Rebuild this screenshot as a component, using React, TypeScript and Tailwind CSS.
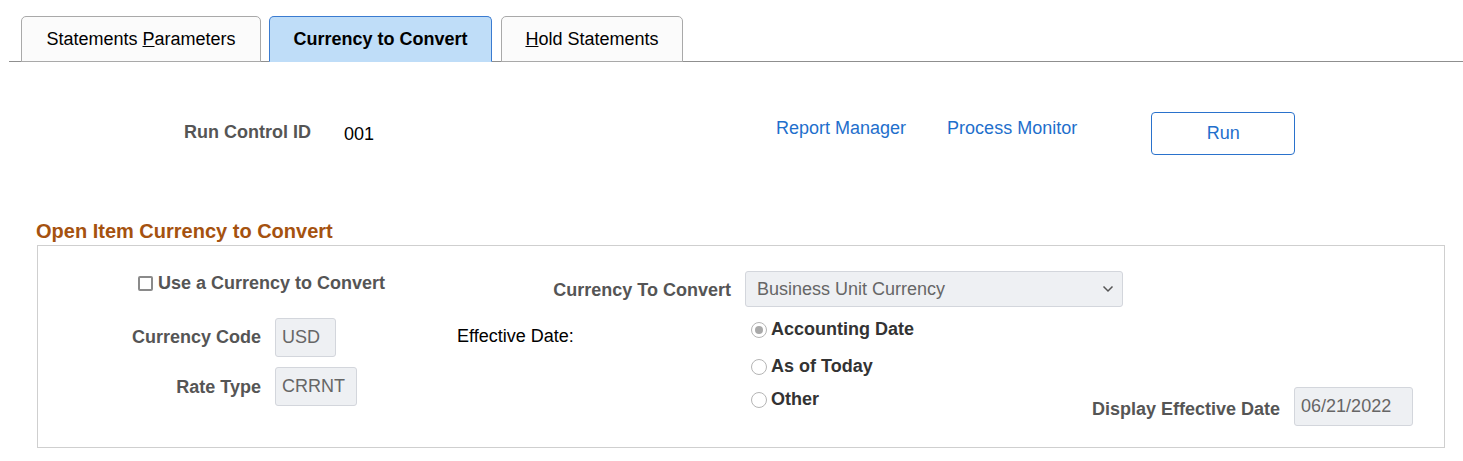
import React from 'react';

const Tab = ({ label, active }: { label: React.ReactNode; active?: boolean }) => (
  <div
    className={
      'h-[46px] -mb-px flex items-center justify-center rounded-t-[5px] border text-[18px] ' +
      (active
        ? 'bg-[#bfddf8] border-[#3a7bd0] border-b-[#bfddf8] font-bold text-black'
        : 'bg-[#fbfbfb] border-[#a9a9a9] text-black')
    }
  >
    {label}
  </div>
);

const Radio = ({ checked, label }: { checked?: boolean; label: string }) => (
  <div className="flex items-center gap-[4px]">
    <span className="w-[16px] h-[16px] rounded-full border border-[#b5b5b5] bg-white flex items-center justify-center">
      {checked && <span className="w-[8px] h-[8px] rounded-full bg-[#a9a9a9]" />}
    </span>
    <span className="text-[18px] font-bold text-[#333333]">{label}</span>
  </div>
);

const ReadOnly = ({ value, w }: { value: string; w: string }) => (
  <div className={`${w} h-[39px] flex items-center px-[6px] rounded-[3px] border border-[#d3d6dc] bg-[#eef0f3] text-[18px] text-[#666666]`}>
    {value}
  </div>
);

export default function App() {
  return (
    <div className="w-[1463px] h-[461px] bg-white font-['Liberation_Sans',Arial,sans-serif] overflow-hidden">
      {/* Tabs */}
      <div className="pt-[16px] ml-[9px] border-b border-[#8f8f8f]">
        <div className="flex pl-[12px]">
          <div className="w-[240px]">
            <Tab label={<span>Statements <span className="underline">P</span>arameters</span>} />
          </div>
          <div className="w-[223px] ml-[8px]">
            <Tab active label="Currency to Convert" />
          </div>
          <div className="w-[182px] ml-[9px]">
            <Tab label={<span><span className="underline">H</span>old Statements</span>} />
          </div>
        </div>
      </div>

      {/* Run control row */}
      <div className="flex items-start mt-[50px] h-[43px]">
        <div className="ml-[184px] mt-[7px] text-[18px] font-bold text-[#555555]">Run Control ID</div>
        <div className="ml-[33px] mt-[9px] text-[18px] text-black">001</div>
        <div className="ml-[402px] mt-[3px] text-[18px] text-[#1f6fcc]">Report Manager</div>
        <div className="ml-[41px] mt-[3px] text-[18px] text-[#1f6fcc]">Process Monitor</div>
        <button className="ml-[74px] w-[144px] h-[43px] rounded-[4px] border border-[#2a72cc] bg-white text-[18px] text-[#1f6fcc]">
          Run
        </button>
      </div>

      {/* Section header */}
      <div className="mt-[64px] ml-[36px] text-[20px] font-bold text-[#a5520f] leading-[24px]">
        Open Item Currency to Convert
      </div>

      {/* Box */}
      <div className="ml-[37px] mt-[2px] w-[1408px] h-[203px] border border-[#cfcfcf] pt-[25px]">
        {/* Row A */}
        <div className="flex items-start h-[36px]">
          <div className="w-[412px] pl-[100px] pt-[2px] flex items-center gap-[5px]">
            <span className="w-[15px] h-[15px] border-2 border-[#8a8a8a] rounded-[2px] bg-white" />
            <span className="text-[18px] font-bold text-[#555555] leading-[20px]">Use a Currency to Convert</span>
          </div>
          <div className="w-[281px] text-right text-[18px] font-bold text-[#555555] pt-[9px] leading-[20px]">
            Currency To Convert
          </div>
          <div className="ml-[14px] w-[378px] h-[36px] rounded-[3px] border border-[#d3d6dc] bg-[#eef0f3] flex items-center justify-between pl-[11px] pr-[8px]">
            <span className="text-[18px] text-[#666666]">Business Unit Currency</span>
            <svg width="12" height="8" viewBox="0 0 12 8" fill="none">
              <path d="M1.5 1.5 L6 6 L10.5 1.5" stroke="#555" strokeWidth="1.5" />
            </svg>
          </div>
        </div>

        {/* Row B */}
        <div className="flex items-start mt-[11px]">
          <div className="w-[412px] flex flex-col gap-[10px]">
            <div className="flex items-center">
              <div className="w-[223px] text-right text-[18px] font-bold text-[#555555]">Currency Code</div>
              <div className="ml-[14px]">
                <ReadOnly value="USD" w="w-[61px]" />
              </div>
            </div>
            <div className="flex items-center">
              <div className="w-[223px] pt-[2px] text-right text-[18px] font-bold text-[#555555]">Rate Type</div>
              <div className="ml-[14px]">
                <ReadOnly value="CRRNT" w="w-[82px]" />
              </div>
            </div>
          </div>
          <div className="ml-[7px] w-[294px] mt-[5px] text-[18px] text-black">Effective Date:</div>
          <div className="flex flex-col gap-[10px] -mt-[2px] w-[300px]">
            <Radio checked label="Accounting Date" />
            <Radio label="As of Today" />
            <div className="-mt-[4px]">
              <Radio label="Other" />
            </div>
          </div>
          <div className="flex items-center mt-[69px] ml-[41px]">
            <span className="pt-[5px] text-[18px] font-bold text-[#555555]">Display Effective Date</span>
            <div className="ml-[14px]">
              <ReadOnly value="06/21/2022" w="w-[119px]" />
            </div>
          </div>
        </div>
      </div>
    </div>
  );
}
